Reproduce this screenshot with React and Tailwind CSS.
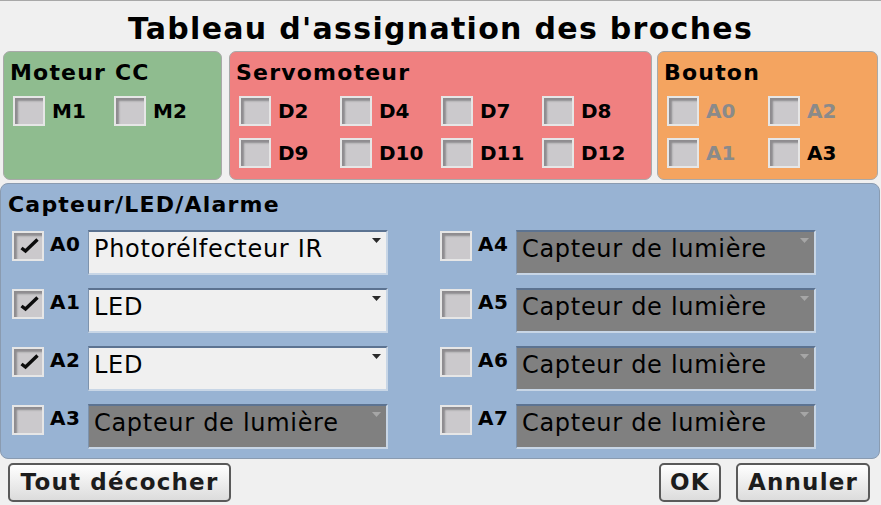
import React from 'react';

const font = "font-['DejaVu_Sans','Verdana',sans-serif]";

function CheckBox({ checked }) {
  return (
    <div className="relative h-[30px] w-[32px] shrink-0 border-2 border-[#e6e6e6] bg-[#cbc9cc] shadow-[inset_3px_3px_2px_#8e8c8f]">
      {checked && (
        <svg className="absolute left-[6px] top-[5px]" width="20" height="17" viewBox="0 0 20 17">
          <path d="M1.5 10 L5.5 13 L17.5 1.5" fill="none" stroke="#0c0c0c" strokeWidth="3.4" strokeLinejoin="miter" strokeLinecap="butt" />
        </svg>
      )}
    </div>
  );
}

function Pin({ label, dim }) {
  return (
    <div className="flex items-center gap-[7px]">
      <CheckBox />
      <span className={`text-[20px] font-bold leading-none ${dim ? 'text-[#8a8a8a]' : 'text-black'}`}>{label}</span>
    </div>
  );
}

function Panel({ title, color, className, children }) {
  return (
    <div className={`flex flex-col rounded-[7px] border border-[#a9a9a9] pl-[9px] pt-[8px] ${color} ${className}`}>
      <h2 className="-ml-[3px] text-[22px] font-bold leading-[26px] tracking-[1.2px] text-black">{title}</h2>
      <div className="mt-[10px] grid grid-cols-[repeat(4,101px)] gap-y-[12px]">{children}</div>
    </div>
  );
}

function Select({ value, enabled }) {
  return (
    <div
      className={`relative h-[45px] w-[300px] border-t-2 border-l border-r-2 border-b-2 border-t-[#5c7391] border-l-[#7d93ad] border-r-[#c8d6e6] border-b-[#c8d6e6] pl-[5px] pt-[2px] text-[24px] leading-[30px] tracking-[0.7px] text-black ${
        enabled ? 'bg-[#f0f0f0]' : 'bg-[#808080]'
      }`}
    >
      {value}
      <svg className="absolute right-[5px] top-[6px]" width="9" height="6" viewBox="0 0 9 6">
        <path d="M0 0 H9 L4.5 5 Z" fill={enabled ? '#2a2a2a' : '#a6a6a6'} />
      </svg>
    </div>
  );
}

function SensorRow({ pin, checked, value }) {
  return (
    <div className="flex items-start">
      <div className="mt-[1px]">
        <CheckBox checked={checked} />
      </div>
      <span className="ml-[6px] mt-[4px] w-[38px] text-[20px] font-bold leading-none tracking-[0.5px]">{pin}</span>
      <Select value={value} enabled={checked} />
    </div>
  );
}

function Button({ children, className }) {
  return (
    <button
      className={`h-[39px] rounded-[5px] border-2 border-[#5a5a5a] bg-gradient-to-b from-white to-[#dcdcdc] text-[23px] font-bold tracking-[1.2px] text-[#1c1c1c] ${className}`}
    >
      {children}
    </button>
  );
}

export default function App() {
  const left = [
    { pin: 'A0', checked: true, value: 'Photorélfecteur IR' },
    { pin: 'A1', checked: true, value: 'LED' },
    { pin: 'A2', checked: true, value: 'LED' },
    { pin: 'A3', checked: false, value: 'Capteur de lumière' },
  ];
  const right = ['A4', 'A5', 'A6', 'A7'];

  return (
    <div className={`flex h-[505px] w-[881px] flex-col border-t border-[#a8a8a8] bg-[#f0f0f0] ${font}`}>
      <h1 className="flex h-[50px] items-center justify-center pt-[5px] text-[30px] font-bold leading-none tracking-[1.3px] text-black">
        Tableau d'assignation des broches
      </h1>

      <div className="flex h-[129px] pl-[3px]">
        <Panel title="Moteur CC" color="bg-[#8fbc8f]" className="w-[219px]">
          <Pin label="M1" />
          <Pin label="M2" />
        </Panel>
        <Panel title="Servomoteur" color="bg-[#f08080]" className="ml-[7px] w-[423px]">
          <Pin label="D2" />
          <Pin label="D4" />
          <Pin label="D7" />
          <Pin label="D8" />
          <Pin label="D9" />
          <Pin label="D10" />
          <Pin label="D11" />
          <Pin label="D12" />
        </Panel>
        <Panel title="Bouton" color="bg-[#f4a460]" className="ml-[5px] w-[221px]">
          <Pin label="A0" dim />
          <Pin label="A2" dim />
          <div className="col-start-1">
            <Pin label="A1" dim />
          </div>
          <Pin label="A3" />
        </Panel>
      </div>

      <div className="mt-[3px] h-[276px] w-[880px] rounded-[8px] border border-[#8a9bb0] bg-[#98b3d3] pl-[11px] pt-[8px]">
        <h2 className="-ml-[4px] text-[22px] font-bold leading-[26px] tracking-[1.2px]">Capteur/LED/Alarme</h2>
        <div className="mt-[12px] flex">
          <div className="flex w-[428px] flex-col gap-[13px]">
            {left.map((r) => (
              <SensorRow key={r.pin} {...r} />
            ))}
          </div>
          <div className="flex flex-col gap-[13px]">
            {right.map((p) => (
              <SensorRow key={p} pin={p} checked={false} value="Capteur de lumière" />
            ))}
          </div>
        </div>
      </div>

      <div className="flex flex-1 items-center px-[8px] pt-[1px]">
        <Button className="w-[223px]">Tout décocher</Button>
        <div className="ml-auto flex gap-[15px] pr-[3px]">
          <Button className="w-[62px]">OK</Button>
          <Button className="w-[134px]">Annuler</Button>
        </div>
      </div>
    </div>
  );
}
